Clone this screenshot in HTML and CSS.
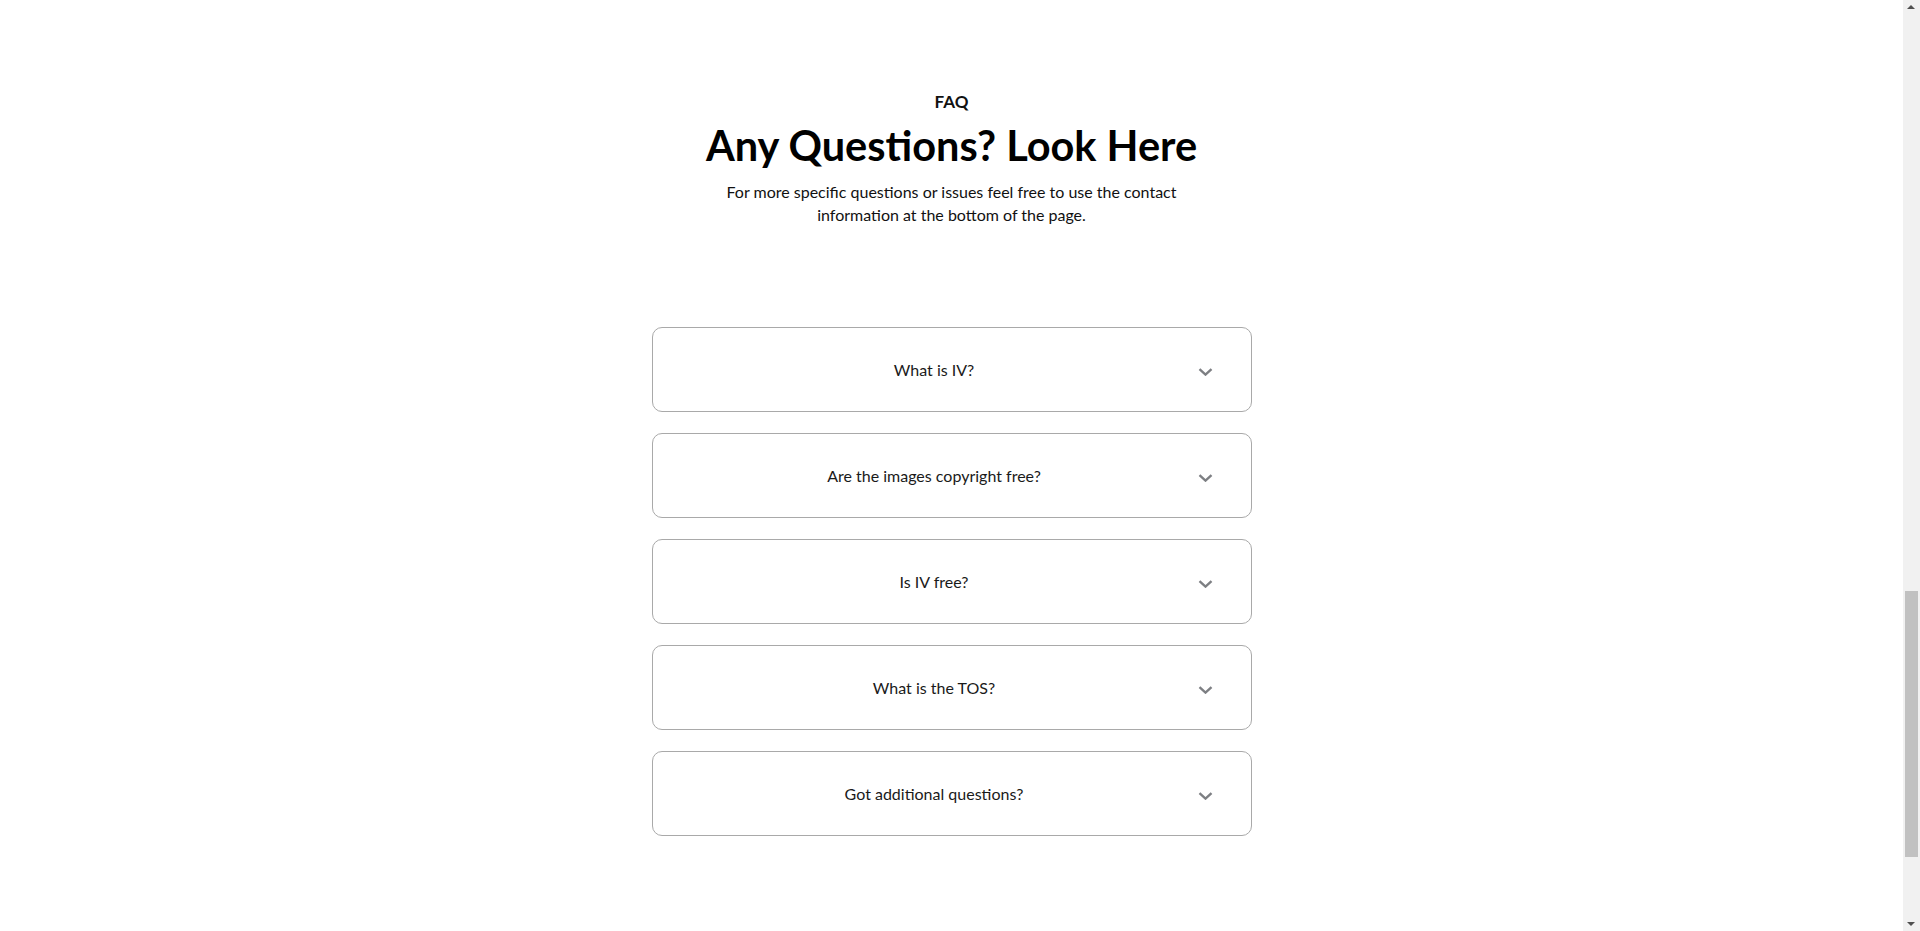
FILE: index.html
```html
<!DOCTYPE html>
<html lang="en">
<head>
  <meta charset="UTF-8">
  <meta name="viewport" content="width=device-width, initial-scale=1.0">
  <title>FAQ</title>
  <link rel="stylesheet" href="styles.css">
</head>
<body>
  <section class="faq">
    <div class="faq-header">
      <p class="faq-label">FAQ</p>
      <h1>Any Questions? Look Here</h1>
      <p class="faq-intro">For more specific questions or issues feel free to use the contact<br>information at the bottom of the page.</p>
    </div>

    <div class="faq-list">
      <div class="faq-item">
        <span class="question">What is IV?</span>
        <svg class="chevron" viewBox="0 0 15 8"><polyline points="1.5,1.2 7.5,6.6 13.5,1.2"/></svg>
      </div>
      <div class="faq-item">
        <span class="question">Are the images copyright free?</span>
        <svg class="chevron" viewBox="0 0 15 8"><polyline points="1.5,1.2 7.5,6.6 13.5,1.2"/></svg>
      </div>
      <div class="faq-item">
        <span class="question">Is IV free?</span>
        <svg class="chevron" viewBox="0 0 15 8"><polyline points="1.5,1.2 7.5,6.6 13.5,1.2"/></svg>
      </div>
      <div class="faq-item">
        <span class="question">What is the TOS?</span>
        <svg class="chevron" viewBox="0 0 15 8"><polyline points="1.5,1.2 7.5,6.6 13.5,1.2"/></svg>
      </div>
      <div class="faq-item">
        <span class="question">Got additional questions?</span>
        <svg class="chevron" viewBox="0 0 15 8"><polyline points="1.5,1.2 7.5,6.6 13.5,1.2"/></svg>
      </div>
    </div>
  </section>

  <!-- page scrollbar, drawn since the window hides its own -->
  <div class="scrollbar" aria-hidden="true"><span class="thumb"></span></div>
</body>
</html>
```

FILE: styles.css
```css
body {
  font-family: Lato, "Open Sans", sans-serif;
  background-color: #fff;
  color: #111;
  margin: 0;
  padding-right: 17px;
}

.faq {
  padding: 92px 0 96px;
}

.faq-header {
  text-align: center;
}

.faq-label {
  font-size: 17px;
  line-height: 20px;
  font-weight: 700;
  margin: 0 0 9px;
}

.faq-header h1 {
  font-size: 41.5px;
  line-height: 48px;
  font-weight: 700;
  color: #000;
  margin: 0 0 11px;
}

.faq-intro {
  font-size: 16px;
  line-height: 23px;
  margin: 0;
}

.faq-list {
  width: 600px;
  margin: 101px auto 0;
  display: flex;
  flex-direction: column;
  gap: 21px;
}

.faq-item {
  display: flex;
  align-items: center;
  padding: 30px 38px 30px 18px;
  border: 1px solid #a9a9a9;
  border-radius: 10px;
  cursor: pointer;
}

.question {
  flex: 1;
  text-align: center;
  font-size: 16px;
  line-height: 23px;
  color: #1a1a1a;
}

.chevron {
  width: 15px;
  height: 8px;
  margin-top: 5px;
  fill: none;
  stroke: #7d7f83;
  stroke-width: 2.4;
}

.scrollbar {
  position: fixed;
  top: 0;
  right: 0;
  width: 17px;
  height: 100%;
  background-color: #f1f1f1;
}

.scrollbar::before,
.scrollbar::after {
  content: '';
  position: absolute;
  left: 4px;
  border-left: 4px solid transparent;
  border-right: 4px solid transparent;
}

.scrollbar::before {
  top: 5px;
  border-bottom: 4px solid #505050;
}

.scrollbar::after {
  bottom: 5px;
  border-top: 4px solid #505050;
}

.scrollbar .thumb {
  position: absolute;
  top: 591px;
  left: 2px;
  right: 2px;
  height: 266px;
  background-color: #c1c1c1;
}
```
